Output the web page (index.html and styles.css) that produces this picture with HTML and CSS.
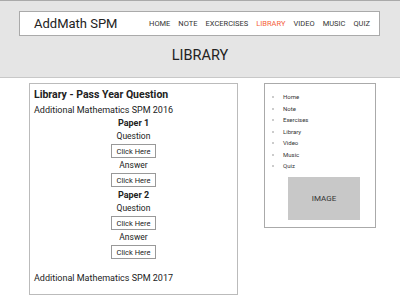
FILE: index.html
```html
<!DOCTYPE html>
<html lang="en">
<head>
    <meta charset="UTF-8">
    <meta name="viewport" content="width=device-width, initial-scale=1.0">
    <title>AddMath SPM - Library</title>
    <link rel="stylesheet" href="styles.css">
</head>
<body>

<div class="header">
    <div class="navbar">
        <span class="brand">AddMath SPM</span>
        <ul class="menu">
            <li>HOME</li>
            <li>NOTE</li>
            <li>EXCERCISES</li>
            <li class="active">LIBRARY</li>
            <li>VIDEO</li>
            <li>MUSIC</li>
            <li>QUIZ</li>
        </ul>
    </div>
    <h1 class="title">LIBRARY</h1>
</div>

<div class="main">
    <div class="content">
        <h2>Library - Pass Year Question</h2>
        <p class="year">Additional Mathematics SPM 2016</p>
        <div class="paper">
            <h3>Paper 1</h3>
            <p>Question</p>
            <button class="btn">Click Here</button>
            <p class="ans">Answer</p>
            <button class="btn">Click Here</button>
            <h3>Paper 2</h3>
            <p>Question</p>
            <button class="btn">Click Here</button>
            <p class="ans">Answer</p>
            <button class="btn">Click Here</button>
        </div>
        <p class="year next">Additional Mathematics SPM 2017</p>
    </div>

    <div class="sidebar">
        <ul class="links">
            <li>Home</li>
            <li>Note</li>
            <li>Exercises</li>
            <li>Library</li>
            <li>Video</li>
            <li>Music</li>
            <li>Quiz</li>
        </ul>
        <div class="image">IMAGE</div>
    </div>
</div>

</body>
</html>
```

FILE: styles.css
```css
body {
    margin: 0;
    font-family: Roboto, "Liberation Sans", sans-serif;
    color: #222;
    background: #fff;
}
.header {
    background-color: #e5e5e5;
    border-top: 1px solid #aaa;
    border-bottom: 1px solid #c8c8c8;
    height: 78px;
    padding-top: 10px;
    box-sizing: border-box;
}
.navbar {
    display: flex;
    align-items: center;
    justify-content: space-between;
    margin: 0 20px 0 19px;
    height: 25px;
    background: #fff;
    border: 1px solid #aaa;
    box-sizing: border-box;
    padding: 0 9px 0 14px;
}
.brand {
    font-size: 13px;
    white-space: nowrap;
    color: #222;
}
.menu {
    list-style: none;
    display: flex;
    gap: 8px;
    margin: 0;
    padding: 0;
    font-size: 7.5px;
    color: #333;
}
.menu .active {
    color: #f4623a;
}
.title {
    margin: 11px 0 0;
    text-align: center;
    font-weight: normal;
    font-size: 14.5px;
}
.main {
    display: flex;
    align-items: flex-start;
    gap: 26px;
    margin: 5px 0 0 29px;
}
.content {
    width: 209px;
    height: 212px;
    box-sizing: border-box;
    border: 1px solid #bbb;
    padding: 4px 4px;
}
.content h2 {
    margin: 0;
    font-size: 10.5px;
}
.year {
    margin: 4px 0 0;
    font-size: 9px;
}
.next {
    margin-top: 14px;
}
.paper {
    display: flex;
    flex-direction: column;
    align-items: center;
    font-size: 8.5px;
}
.paper h3 {
    margin: 3px 0 0;
    font-size: 9px;
}
.paper p {
    margin: 3px 0 0;
}
.paper .ans {
    margin-top: 2px;
}
.btn {
    margin-top: 3px;
    font-family: inherit;
    font-size: 7.5px;
    color: #222;
    background: #fff;
    border: 1px solid #999;
    padding: 1px 5px;
    height: 14px;
}
.sidebar {
    width: 112px;
    height: 145px;
    box-sizing: border-box;
    border: 1px solid #aaa;
    padding: 7px 0 0;
}
.links {
    margin: 0;
    padding-left: 18px;
    font-size: 6px;
    color: #333;
}
.links li {
    line-height: 11.5px;
}
.links li::marker {
    color: #bbb;
}
.image {
    margin: 5px 0 0 23px;
    width: 72px;
    height: 43px;
    background: #c8c8c8;
    display: flex;
    align-items: center;
    justify-content: center;
    font-size: 8px;
    color: #333;
}
```
